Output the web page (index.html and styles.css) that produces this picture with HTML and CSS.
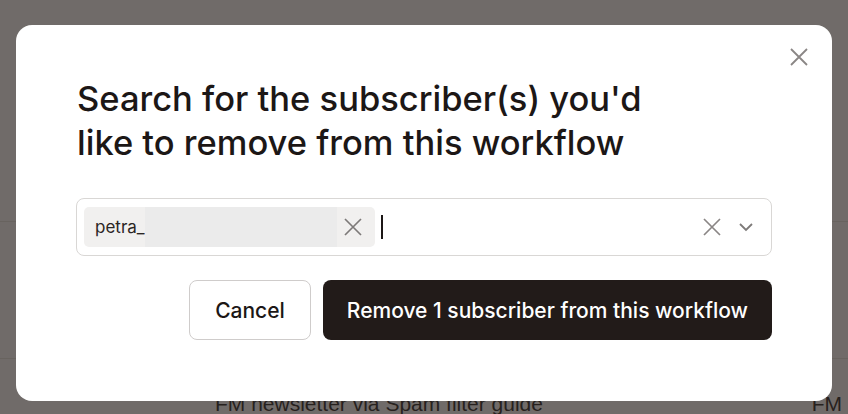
FILE: index.html
```html
<!DOCTYPE html>
<html lang="en">
<head>
    <meta charset="UTF-8">
    <title>Remove subscribers</title>
    <link rel="stylesheet" href="styles.css">
</head>
<body>

<div class="page">
    <div class="page-row first"></div>
    <div class="page-row"></div>
    <div class="page-row last">
        <span class="row-name">FM newsletter via Spam filter guide</span>
        <span class="row-owner">FM</span>
    </div>
</div>

<div class="backdrop">
    <div class="modal">
        <button class="modal-close" aria-label="Close">
            <svg width="20" height="20" viewBox="0 0 20 20"><path d="M2 2L18 18M18 2L2 18" stroke="#8a8685" stroke-width="1.8" fill="none"/></svg>
        </button>

        <h2 class="modal-title">Search for the subscriber(s) you'd like to remove from this workflow</h2>

        <div class="select-box">
            <div class="chip">
                <span class="chip-label">petra_</span>
                <span class="chip-hidden"></span>
                <svg class="chip-remove" width="20" height="20" viewBox="0 0 20 20"><path d="M2 2L18 18M18 2L2 18" stroke="#7d7a79" stroke-width="1.7" fill="none"/></svg>
            </div>
            <span class="caret"></span>
            <div class="select-tools">
                <svg width="20" height="20" viewBox="0 0 20 20"><path d="M2 2L18 18M18 2L2 18" stroke="#8a8685" stroke-width="1.7" fill="none"/></svg>
                <svg width="16" height="16" viewBox="0 0 16 16"><path d="M2 5L8 11L14 5" stroke="#7d7a79" stroke-width="1.8" fill="none"/></svg>
            </div>
        </div>

        <div class="modal-actions">
            <button class="btn btn-light">Cancel</button>
            <button class="btn btn-dark">Remove 1 subscriber from this workflow</button>
        </div>
    </div>
</div>

</body>
</html>
```

FILE: styles.css
```css
body {
    margin: 0;
    font-family: Inter, "Noto Sans", sans-serif;
    background-color: #ffffff;
    color: #1f1a18;
    overflow: hidden;
}

.page {
    height: 414px;
    display: flex;
    flex-direction: column;
    background-color: #f4f2f0;
}

.page-row {
    height: 136px;
    border-top: 1px solid #dedad6;
}

.page-row.first {
    height: 221px;
    border-top: none;
}

.page-row.last {
    flex: 1;
    display: flex;
    align-items: flex-end;
    font-family: "Liberation Sans", Arial, sans-serif;
    font-size: 21px;
    color: #2a2624;
}

.row-name {
    margin-left: 215px;
    line-height: 20px;
    flex: 1;
}

.row-owner {
    margin-right: 6px;
    line-height: 20px;
}

.backdrop {
    position: fixed;
    inset: 0;
    background-color: rgba(38, 32, 28, 0.64);
    display: flex;
    align-items: flex-start;
    justify-content: center;
    padding-top: 25px;
}

.modal {
    position: relative;
    width: 816px;
    height: 376px;
    box-sizing: border-box;
    background-color: #fff;
    border-radius: 16px;
    padding: 52px 60px 0 60px;
}

.modal-close {
    position: absolute;
    top: 22px;
    right: 23px;
    background: none;
    border: none;
    padding: 0;
    cursor: pointer;
}

.modal-title {
    margin: 0 0 0 1px;
    width: 600px;
    font-size: 34.5px;
    font-weight: 500;
    line-height: 44px;
    color: #1c1716;
}

.select-box {
    margin-top: 33px;
    height: 58px;
    box-sizing: border-box;
    border: 1px solid #d9d7d5;
    border-radius: 8px;
    display: flex;
    align-items: center;
    padding: 0 17px 0 7px;
}

.chip {
    width: 291px;
    height: 40px;
    box-sizing: border-box;
    background-color: #f1f0ef;
    border-radius: 5px;
    display: flex;
    align-items: center;
    padding-left: 11px;
}

.chip-label {
    font-size: 17px;
    color: #2b2624;
}

.chip-hidden {
    width: 192px;
    height: 40px;
    background-color: #ebebeb;
}

.chip-remove {
    margin-left: 6px;
}

.caret {
    width: 2px;
    height: 24px;
    background-color: #1c1716;
    margin-left: 6px;
}

.select-tools {
    margin-left: auto;
    display: flex;
    align-items: center;
    gap: 16px;
}

.modal-actions {
    margin-top: 24px;
    display: flex;
    justify-content: flex-end;
    gap: 12px;
}

.btn {
    height: 60px;
    border-radius: 8px;
    font-family: Inter, "Noto Sans", sans-serif;
    font-size: 21px;
    font-weight: 500;
    padding: 0 24px;
    white-space: nowrap;
    cursor: pointer;
}

.btn-light {
    background-color: #fff;
    color: #1c1716;
    border: 1px solid #cfcccb;
    padding: 0 25px;
}

.btn-dark {
    background-color: #221b19;
    color: #fff;
    border: none;
}
```
